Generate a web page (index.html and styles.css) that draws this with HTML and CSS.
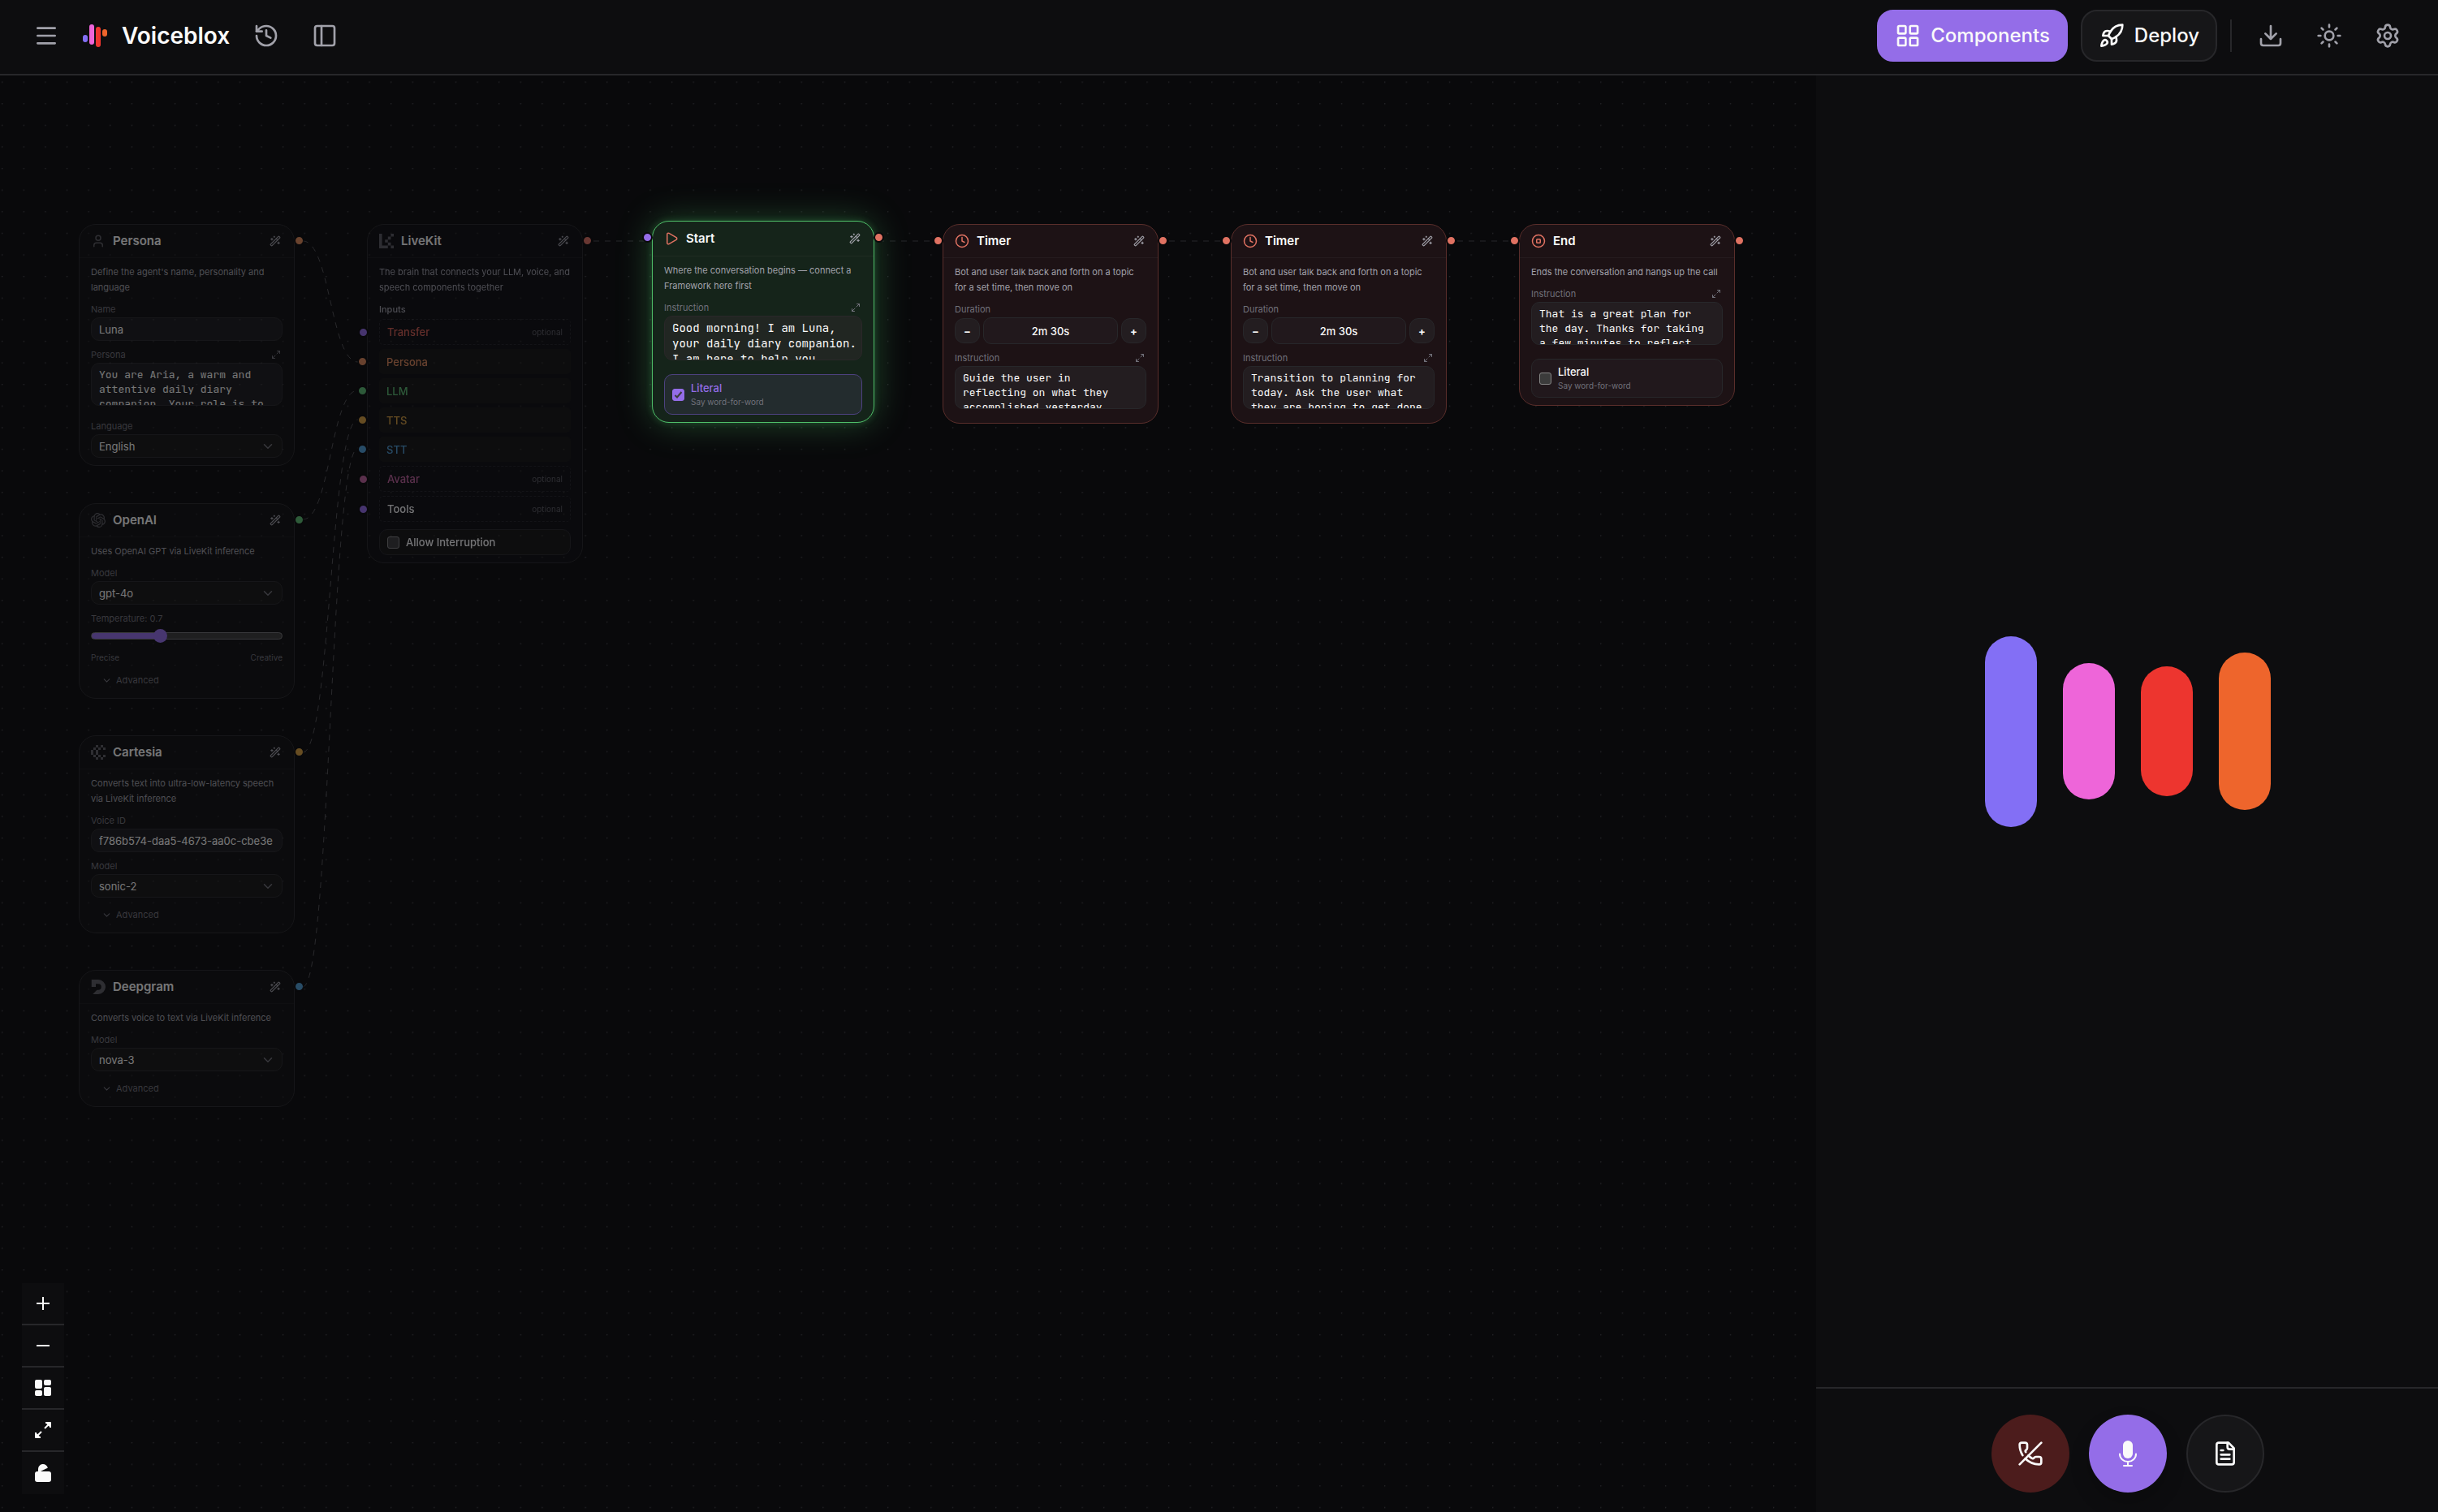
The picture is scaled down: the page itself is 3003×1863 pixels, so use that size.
FILE: index.html
```html
<!DOCTYPE html>
<html lang="en">
<head>
<meta charset="utf-8">
<meta name="viewport" content="width=device-width, initial-scale=1">
<title>Voiceblox</title>
<link rel="stylesheet" href="styles.css">
</head>
<body>
<svg class="sprite" aria-hidden="true">
  <symbol id="i-wand" viewBox="0 0 24 24"><path d="m21.64 3.64-1.28-1.28a1.21 1.21 0 0 0-1.72 0L2.36 18.64a1.21 1.21 0 0 0 0 1.72l1.28 1.28a1.2 1.2 0 0 0 1.72 0L21.64 5.36a1.2 1.2 0 0 0 0-1.72"/><path d="m14 7 3 3M5 6v4M19 14v4M10 2v2M7 8H3M21 16h-4M11 3H9"/></symbol>
  <symbol id="i-expand" viewBox="0 0 24 24"><path d="M15 3h6v6"/><path d="m21 3-7 7"/><path d="m3 21 7-7"/><path d="M9 21H3v-6"/></symbol>
  <symbol id="i-chevron" viewBox="0 0 24 24"><path d="m6 9 6 6 6-6"/></symbol>
  <symbol id="i-clock" viewBox="0 0 24 24"><circle cx="12" cy="12" r="10"/><path d="M12 6v6l4 2"/></symbol>
</svg>

<header class="topbar">
  <div class="topbar-group">
    <button class="icon-btn" type="button" aria-label="Menu"><svg class="icon" viewBox="0 0 24 24"><path d="M4 5h16M4 12h16M4 19h16"/></svg></button>
    <a class="brand" href="#">
      <svg class="brand-mark" viewBox="0 0 30 28" aria-hidden="true"><rect x="0" y="13" width="6" height="9" rx="3" fill="#836ff5"/><rect x="8" y="0" width="6" height="25" rx="3" fill="#ee65d9"/><rect x="16" y="3" width="6" height="25" rx="3" fill="#ed352f"/><rect x="24" y="6" width="6" height="9" rx="3" fill="#ee652c"/></svg>
      <span>Voiceblox</span>
    </a>
    <button class="icon-btn" type="button" aria-label="History"><svg class="icon" viewBox="0 0 24 24"><path d="M3 12a9 9 0 1 0 9-9 9.75 9.75 0 0 0-6.74 2.74L3 8"/><path d="M3 3v5h5M12 7v5l4 2"/></svg></button>
    <button class="icon-btn" type="button" aria-label="Toggle panel"><svg class="icon" viewBox="0 0 24 24"><rect x="3" y="3" width="18" height="18" rx="2"/><path d="M9 3v18"/></svg></button>
  </div>
  <div class="topbar-group">
    <button class="btn btn-primary" type="button"><svg class="icon" viewBox="0 0 24 24"><rect x="3" y="3" width="7" height="7" rx="1"/><rect x="14" y="3" width="7" height="7" rx="1"/><rect x="14" y="14" width="7" height="7" rx="1"/><rect x="3" y="14" width="7" height="7" rx="1"/></svg>Components</button>
    <button class="btn btn-outline" type="button"><svg class="icon" viewBox="0 0 24 24"><path d="M12 15v5s3.03-.55 4-2c1.08-1.62 0-5 0-5"/><path d="M4.5 16.5c-1.5 1.26-2 5-2 5s3.74-.5 5-2c.71-.84.7-2.13-.09-2.91a2.18 2.18 0 0 0-2.91-.09"/><path d="M9 12a22 22 0 0 1 2-3.95A12.88 12.88 0 0 1 22 2c0 2.72-.78 7.5-6 11a22.4 22.4 0 0 1-4 2z"/><path d="M9 12H4s.55-3.03 2-4c1.62-1.08 5 .05 5 .05"/></svg>Deploy</button>
    <span class="divider"></span>
    <button class="icon-btn" type="button" aria-label="Download"><svg class="icon" viewBox="0 0 24 24"><path d="M12 15V3M21 15v4a2 2 0 0 1-2 2H5a2 2 0 0 1-2-2v-4M7 10l5 5 5-5"/></svg></button>
    <button class="icon-btn" type="button" aria-label="Theme"><svg class="icon" viewBox="0 0 24 24"><circle cx="12" cy="12" r="4"/><path d="M12 2v2M12 20v2M4.93 4.93l1.41 1.41M17.66 17.66l1.41 1.41M2 12h2M20 12h2M6.34 17.66l-1.41 1.41M19.07 4.93l-1.41 1.41"/></svg></button>
    <button class="icon-btn" type="button" aria-label="Settings"><svg class="icon" viewBox="0 0 24 24"><path d="M9.671 4.136a2.34 2.34 0 0 1 4.659 0 2.34 2.34 0 0 0 3.319 1.915 2.34 2.34 0 0 1 2.33 4.033 2.34 2.34 0 0 0 0 3.831 2.34 2.34 0 0 1-2.33 4.033 2.34 2.34 0 0 0-3.319 1.915 2.34 2.34 0 0 1-4.659 0 2.34 2.34 0 0 0-3.32-1.915 2.34 2.34 0 0 1-2.33-4.033 2.34 2.34 0 0 0 0-3.831A2.34 2.34 0 0 1 6.35 6.051a2.34 2.34 0 0 0 3.319-1.915"/><circle cx="12" cy="12" r="3"/></svg></button>
  </div>
</header>

<main class="workspace">
  <section class="canvas" aria-label="Flow canvas">
    <svg class="edges" aria-hidden="true">
      <defs><pattern id="dots" x="2" y="7.5" width="26.61" height="26.61" patternUnits="userSpaceOnUse"><circle cx="0.7" cy="0.7" r="0.7" fill="#2b2b2f"/></pattern></defs>
      <rect width="100%" height="100%" fill="url(#dots)"/>
      <g class="edge-lines">
        <path d="M373 204C407 204 407 353 441 353"/>
        <path d="M373 547C407 547 407 388 441 388"/>
        <path d="M373 834C407 834 407 424 441 424"/>
        <path d="M373 1123C407 1123 407 459 441 459"/>
        <path d="M731 204H796"/>
        <path d="M1082 204H1150"/>
        <path d="M1440 204H1506"/>
        <path d="M1795 204H1861"/>
      </g>
    </svg>

    <article class="node dim at-persona">
      <header class="node-head"><svg class="node-icon" viewBox="0 0 24 24"><path d="M19 21v-2a4 4 0 0 0-4-4H9a4 4 0 0 0-4 4v2"/><circle cx="12" cy="7" r="4"/></svg><h2>Persona</h2><button class="mini" type="button" aria-label="Improve"><svg><use href="#i-wand"/></svg></button></header>
      <div class="node-body">
        <p class="desc">Define the agent's name, personality and language</p>
        <div class="field"><label for="p-name">Name</label><input class="control" id="p-name" type="text" value="Luna"></div>
        <div class="field"><div class="label-row"><label for="p-text">Persona</label><button class="mini small" type="button" aria-label="Expand"><svg><use href="#i-expand"/></svg></button></div><textarea class="control area" id="p-text">You are Aria, a warm and attentive daily diary companion. Your role is to</textarea></div>
        <div class="field"><label for="p-lang">Language</label><div class="select"><select class="control" id="p-lang"><option>English</option></select><svg><use href="#i-chevron"/></svg></div></div>
      </div>
      <span class="handle out orange"></span>
    </article>

    <article class="node dim at-openai">
      <header class="node-head"><svg class="node-icon solid" viewBox="0 0 24 24"><path d="M22.2819 9.8211a5.9847 5.9847 0 0 0-.5157-4.9108 6.0462 6.0462 0 0 0-6.5098-2.9A6.0651 6.0651 0 0 0 4.9807 4.1818a5.9847 5.9847 0 0 0-3.9977 2.9 6.0462 6.0462 0 0 0 .7427 7.0966 5.98 5.98 0 0 0 .511 4.9107 6.051 6.051 0 0 0 6.5146 2.9001A5.9847 5.9847 0 0 0 13.2599 24a6.0557 6.0557 0 0 0 5.7718-4.2058 5.9894 5.9894 0 0 0 3.9977-2.9001 6.0557 6.0557 0 0 0-.7475-7.0729zm-9.022 12.6081a4.4755 4.4755 0 0 1-2.8764-1.0408l.1419-.0804 4.7783-2.7582a.7948.7948 0 0 0 .3927-.6813v-6.7369l2.02 1.1686a.071.071 0 0 1 .038.052v5.5826a4.504 4.504 0 0 1-4.4945 4.4944zm-9.6607-4.1254a4.4708 4.4708 0 0 1-.5346-3.0137l.142.0852 4.783 2.7582a.7712.7712 0 0 0 .7806 0l5.8428-3.3685v2.3324a.0804.0804 0 0 1-.0332.0615L9.74 19.9502a4.4992 4.4992 0 0 1-6.1408-1.6464zM2.3408 7.8956a4.485 4.485 0 0 1 2.3655-1.9728V11.6a.7664.7664 0 0 0 .3879.6765l5.8144 3.3543-2.0201 1.1685a.0757.0757 0 0 1-.071 0l-4.8303-2.7865A4.504 4.504 0 0 1 2.3408 7.872zm16.5963 3.8558L13.1038 8.364 15.1192 7.2a.0757.0757 0 0 1 .071 0l4.8303 2.7913a4.4944 4.4944 0 0 1-.6765 8.1042v-5.6772a.79.79 0 0 0-.407-.667zm2.0107-3.0231l-.142-.0852-4.7735-2.7818a.7759.7759 0 0 0-.7854 0L9.409 9.2297V6.8974a.0662.0662 0 0 1 .0284-.0615l4.8303-2.7866a4.4992 4.4992 0 0 1 6.6802 4.66zM8.3065 12.863l-2.02-1.1638a.0804.0804 0 0 1-.038-.0567V6.0742a4.4992 4.4992 0 0 1 7.3757-3.4537l-.142.0805L8.704 5.459a.7948.7948 0 0 0-.3927.6813zm1.0976-2.3654l2.602-1.4998 2.6069 1.4998v2.9994l-2.5974 1.4997-2.6067-1.4997Z"/></svg><h2>OpenAI</h2><button class="mini" type="button" aria-label="Improve"><svg><use href="#i-wand"/></svg></button></header>
      <div class="node-body">
        <p class="desc">Uses OpenAI GPT via LiveKit inference</p>
        <div class="field"><label for="o-model">Model</label><div class="select"><select class="control" id="o-model"><option>gpt-4o</option></select><svg><use href="#i-chevron"/></svg></div></div>
        <div class="field"><label for="o-temp">Temperature: 0.7</label><input class="range" id="o-temp" type="range" min="0" max="2" step="0.1" value="0.7" style="--fill: 35%"></div>
        <div class="hints"><span>Precise</span><span>Creative</span></div>
        <button class="advanced" type="button"><svg><use href="#i-chevron"/></svg>Advanced</button>
      </div>
      <span class="handle out green"></span>
    </article>

    <article class="node dim at-cartesia">
      <header class="node-head"><svg class="node-icon solid" viewBox="0 0 24 24"><path d="M8 0h4v4H8zM16 0h4v4h-4zM4 4h4v4H4zM12 4h4v4h-4zM20 4h4v4h-4zM0 8h4v8H0zM8 8h4v8H8zM4 16h4v4H4zM12 16h4v4h-4zM20 16h4v4h-4zM8 20h4v4H8zM16 20h4v4h-4z"/></svg><h2>Cartesia</h2><button class="mini" type="button" aria-label="Improve"><svg><use href="#i-wand"/></svg></button></header>
      <div class="node-body">
        <p class="desc">Converts text into ultra-low-latency speech via LiveKit inference</p>
        <div class="field"><label for="c-voice">Voice ID</label><input class="control" id="c-voice" type="text" value="f786b574-daa5-4673-aa0c-cbe3e"></div>
        <div class="field"><label for="c-model">Model</label><div class="select"><select class="control" id="c-model"><option>sonic-2</option></select><svg><use href="#i-chevron"/></svg></div></div>
        <button class="advanced" type="button"><svg><use href="#i-chevron"/></svg>Advanced</button>
      </div>
      <span class="handle out amber"></span>
    </article>

    <article class="node dim at-deepgram">
      <header class="node-head"><svg class="node-icon solid" viewBox="0 0 24 24"><path d="M1 0h11a12 12 0 0 1 0 24H3l7-7h2a5 5 0 0 0 0-10H8v5H1z"/></svg><h2>Deepgram</h2><button class="mini" type="button" aria-label="Improve"><svg><use href="#i-wand"/></svg></button></header>
      <div class="node-body">
        <p class="desc">Converts voice to text via LiveKit inference</p>
        <div class="field"><label for="d-model">Model</label><div class="select"><select class="control" id="d-model"><option>nova-3</option></select><svg><use href="#i-chevron"/></svg></div></div>
        <button class="advanced" type="button"><svg><use href="#i-chevron"/></svg>Advanced</button>
      </div>
      <span class="handle out blue"></span>
    </article>

    <article class="node dim at-livekit">
      <header class="node-head"><svg class="node-icon solid" viewBox="0 0 20 20"><path d="M0 0h4v16h8v4H0zM16 0h4v4h-4zM12 4h4v4h-4zM8 8h4v4H8zM12 12h4v4h-4zM16 16h4v4h-4z"/></svg><h2>LiveKit</h2><button class="mini" type="button" aria-label="Improve"><svg><use href="#i-wand"/></svg></button></header>
      <div class="node-body">
        <p class="desc">The brain that connects your LLM, voice, and speech components together</p>
        <div class="inputs">
          <h3>Inputs</h3>
          <ul>
            <li class="port open red-text">Transfer<small>optional</small><span class="handle in purple"></span></li>
            <li class="port orange-text">Persona<span class="handle in orange"></span></li>
            <li class="port green-text">LLM<span class="handle in green"></span></li>
            <li class="port amber-text">TTS<span class="handle in amber"></span></li>
            <li class="port blue-text">STT<span class="handle in blue"></span></li>
            <li class="port open pink-text">Avatar<small>optional</small><span class="handle in pink"></span></li>
            <li class="port open">Tools<small>optional</small><span class="handle in purple"></span></li>
          </ul>
        </div>
        <label class="check short"><input type="checkbox"><span class="check-title">Allow Interruption</span></label>
      </div>
      <span class="handle out red"></span>
    </article>

    <article class="node active at-start">
      <header class="node-head"><svg class="node-icon" viewBox="0 0 24 24"><path d="M5 5a2 2 0 0 1 3.008-1.728l11.997 6.998a2 2 0 0 1 .003 3.458l-12 7A2 2 0 0 1 5 19z"/></svg><h2>Start</h2><button class="mini" type="button" aria-label="Improve"><svg><use href="#i-wand"/></svg></button></header>
      <div class="node-body">
        <p class="desc">Where the conversation begins — connect a Framework here first</p>
        <div class="field"><div class="label-row"><label for="s-text">Instruction</label><button class="mini small" type="button" aria-label="Expand"><svg><use href="#i-expand"/></svg></button></div><textarea class="control area" id="s-text">Good morning! I am Luna, your daily diary companion. I am here to help you</textarea></div>
        <label class="check on"><input type="checkbox" checked><span><span class="check-title">Literal</span><span class="check-sub">Say word-for-word</span></span></label>
      </div>
      <span class="handle left purple"></span><span class="handle out red"></span>
    </article>

    <article class="node flow at-timer-1">
      <header class="node-head"><svg class="node-icon"><use href="#i-clock"/></svg><h2>Timer</h2><button class="mini" type="button" aria-label="Improve"><svg><use href="#i-wand"/></svg></button></header>
      <div class="node-body">
        <p class="desc">Bot and user talk back and forth on a topic for a set time, then move on</p>
        <div class="field"><label for="t1-dur">Duration</label><div class="stepper"><button type="button">−</button><input class="control" id="t1-dur" type="text" value="2m 30s"><button type="button">+</button></div></div>
        <div class="field"><div class="label-row"><label for="t1-text">Instruction</label><button class="mini small" type="button" aria-label="Expand"><svg><use href="#i-expand"/></svg></button></div><textarea class="control area" id="t1-text">Guide the user in reflecting on what they accomplished yesterday.</textarea></div>
      </div>
      <span class="handle left red"></span><span class="handle out red"></span>
    </article>

    <article class="node flow at-timer-2">
      <header class="node-head"><svg class="node-icon"><use href="#i-clock"/></svg><h2>Timer</h2><button class="mini" type="button" aria-label="Improve"><svg><use href="#i-wand"/></svg></button></header>
      <div class="node-body">
        <p class="desc">Bot and user talk back and forth on a topic for a set time, then move on</p>
        <div class="field"><label for="t2-dur">Duration</label><div class="stepper"><button type="button">−</button><input class="control" id="t2-dur" type="text" value="2m 30s"><button type="button">+</button></div></div>
        <div class="field"><div class="label-row"><label for="t2-text">Instruction</label><button class="mini small" type="button" aria-label="Expand"><svg><use href="#i-expand"/></svg></button></div><textarea class="control area" id="t2-text">Transition to planning for today. Ask the user what they are hoping to get done</textarea></div>
      </div>
      <span class="handle left red"></span><span class="handle out red"></span>
    </article>

    <article class="node flow at-end">
      <header class="node-head"><svg class="node-icon" viewBox="0 0 24 24"><circle cx="12" cy="12" r="10"/><rect x="9" y="9" width="6" height="6" rx="1"/></svg><h2>End</h2><button class="mini" type="button" aria-label="Improve"><svg><use href="#i-wand"/></svg></button></header>
      <div class="node-body">
        <p class="desc">Ends the conversation and hangs up the call</p>
        <div class="field"><div class="label-row"><label for="e-text">Instruction</label><button class="mini small" type="button" aria-label="Expand"><svg><use href="#i-expand"/></svg></button></div><textarea class="control area" id="e-text">That is a great plan for the day. Thanks for taking a few minutes to reflect</textarea></div>
        <label class="check"><input type="checkbox"><span><span class="check-title">Literal</span><span class="check-sub">Say word-for-word</span></span></label>
      </div>
      <span class="handle left red"></span><span class="handle out red"></span>
    </article>

    <div class="zoom-controls">
      <button type="button" aria-label="Zoom in"><svg viewBox="0 0 24 24"><path d="M4 12h16M12 4v16"/></svg></button>
      <button type="button" aria-label="Zoom out"><svg viewBox="0 0 24 24"><path d="M4 12h16"/></svg></button>
      <button type="button" aria-label="Auto layout"><svg class="filled" viewBox="0 0 24 24"><rect x="3" y="3" width="7" height="9" rx="1"/><rect x="14" y="3" width="7" height="5" rx="1"/><rect x="14" y="12" width="7" height="9" rx="1"/><rect x="3" y="16" width="7" height="5" rx="1"/></svg></button>
      <button type="button" aria-label="Fit view"><svg class="filled"><use href="#i-expand"/></svg></button>
      <button type="button" aria-label="Lock"><svg class="filled" viewBox="0 0 24 24"><rect x="3" y="11" width="18" height="11" rx="2"/><path d="M7 11V7a5 5 0 0 1 9.9-1"/></svg></button>
    </div>
  </section>

  <aside class="call-panel">
    <div class="visualizer"><span class="bar bar-violet"></span><span class="bar bar-pink"></span><span class="bar bar-red"></span><span class="bar bar-orange"></span></div>
    <footer class="call-actions">
      <button class="round hang-up" type="button" aria-label="End call"><svg class="icon" viewBox="0 0 24 24"><path d="M10.1 13.9a14 14 0 0 0 3.732 2.668 1 1 0 0 0 1.213-.303l.355-.465A2 2 0 0 1 17 15h3a2 2 0 0 1 2 2v3a2 2 0 0 1-2 2 18 18 0 0 1-12.728-5.272"/><path d="M22 2 2 22"/><path d="M4.76 13.582A18 18 0 0 1 2 4a2 2 0 0 1 2-2h3a2 2 0 0 1 2 2v3a2 2 0 0 1-.8 1.6l-.468.351a1 1 0 0 0-.292 1.233 14 14 0 0 0 .244.473"/></svg></button>
      <button class="round mic" type="button" aria-label="Microphone"><svg class="icon" viewBox="0 0 32 32"><rect x="10" y="0" width="12" height="22" rx="6" fill="currentColor" stroke="none"/><path d="M6 16.5a10 9.5 0 0 0 20 0M16 26v5M11 31h10"/></svg></button>
      <button class="round transcript" type="button" aria-label="Transcript"><svg class="icon" viewBox="0 0 24 24"><path d="M15 2H6a2 2 0 0 0-2 2v16a2 2 0 0 0 2 2h12a2 2 0 0 0 2-2V7Z"/><path d="M14 2v4a2 2 0 0 0 2 2h4M10 9H8M16 13H8M16 17H8"/></svg></button>
    </footer>
  </aside>
</main>
</body>
</html>
```
FILE: styles.css
```css
:root {
  color-scheme: dark;
  --bg: #09090b;
  --panel: #0d0d0f;
  --line: #27272a;
  --text: #fafafa;
  --muted: #a1a1aa;
  --faint: #71717a;
  --accent: #946de8;
  --red: #e07262;
  --orange: #e08a5a;
  --green: #5cbf72;
  --amber: #d9a13f;
  --blue: #4f9fd6;
  --pink: #c0629c;
}

* { box-sizing: border-box; }

body {
  margin: 0;
  min-height: 100vh;
  display: flex;
  flex-direction: column;
  background: var(--bg);
  color: var(--text);
  font-family: Inter, "Liberation Sans", sans-serif;
  font-size: 13px;
}

button, input, select, textarea { font: inherit; color: inherit; margin: 0; }
button { display: flex; align-items: center; justify-content: center; padding: 0; border: 0; background: none; cursor: pointer; }
h2, h3, p, ul { margin: 0; padding: 0; }
svg { display: block; fill: none; stroke: currentColor; stroke-width: 2; stroke-linecap: round; stroke-linejoin: round; }
.sprite { display: none; }
.icon { width: 32px; height: 32px; }

/* Top bar */
.topbar {
  display: flex;
  justify-content: space-between;
  height: 93px;
  padding: 0 34px 4px 29px;
  background: var(--panel);
  border-bottom: 2px solid var(--line);
}
.topbar-group { display: flex; align-items: center; gap: 16px; }
.icon-btn { width: 56px; height: 56px; color: var(--muted); }
.brand { display: flex; align-items: center; gap: 18px; padding: 0 1px; color: var(--text); font-size: 28px; line-height: 36px; font-weight: 600; text-decoration: none; }
.brand-mark { width: 30px; height: 28px; stroke: none; }
.btn { height: 64px; gap: 12px; padding: 0 20px; border: 2px solid var(--line); border-radius: 20px; background: #161618; font-size: 24px; font-weight: 500; }
.btn-primary { background: var(--accent); border-color: var(--accent); }
.divider { width: 2px; height: 40px; margin-right: 4px; background: var(--line); }

/* Workspace */
.workspace { flex: 1; display: flex; }
.canvas { flex: 1; position: relative; overflow: hidden; }
.edges { position: absolute; inset: 0; width: 100%; height: 100%; stroke: none; }
.edge-lines { stroke: #29292c; stroke-width: 1px; stroke-dasharray: 7 7; stroke-linecap: butt; }

/* Nodes */
.node {
  position: absolute;
  width: 266px;
  border: 1px solid var(--line);
  border-radius: 21px;
  background: #0e0e10;
  --field: #1a1a1d;
  --well: #151514;
  --field-line: #27272a;
}
.dim { opacity: .45; }
.flow { background: #1d1215; border-color: #5a2e2b; --field: #231d20; --well: #21181c; --field-line: #27272a; }
.active {
  width: 274px;
  background: #15241a;
  border-color: #4fbf69;
  box-shadow: 0 0 8px rgb(80 200 110 / 25%), 0 0 44px rgb(80 200 110 / 32%);
  --field: #212622;
  --well: #232c2e;
  --field-line: #2a2729;
}
.at-persona { left: 97px; top: 183px; }
.at-openai { left: 97px; top: 527px; }
.at-cartesia { left: 97px; top: 813px; }
.at-deepgram { left: 97px; top: 1102px; }
.at-livekit { left: 452px; top: 183px; }
.at-start { left: 803px; top: 179px; }
.at-timer-1 { left: 1161px; top: 183px; }
.at-timer-2 { left: 1516px; top: 183px; }
.at-end { left: 1871px; top: 183px; }

.node-head { display: flex; align-items: center; gap: 9px; height: 41px; padding: 0 16px 0 14px; border-bottom: 1px solid rgb(255 255 255 / 4%); }
.active .node-head { height: 43px; }
.node-head h2 { flex: 1; font-size: 15px; line-height: 20px; font-weight: 600; }
.node-icon { width: 18px; height: 18px; color: #5c5c62; }
.node-icon.solid { fill: currentColor; stroke: none; }
.flow .node-icon, .active .node-icon { color: var(--red); }
.mini { color: var(--muted); }
.mini svg { width: 14px; height: 14px; }
.mini.small { color: var(--faint); padding-right: 2px; }
.mini.small svg { width: 12px; height: 12px; }

.node-body { display: flex; flex-direction: column; gap: 9px; padding: 8px 14px 9px; }
.desc { font-size: 11px; line-height: 19px; color: var(--muted); }
.field { display: flex; flex-direction: column; gap: 2px; }
.field label, .inputs h3 { font-size: 11px; line-height: 16px; font-weight: 400; color: var(--faint); }
.label-row { display: flex; justify-content: space-between; }
.control { width: 100%; height: 29px; padding: 0 9px; border: 1px solid var(--field-line); border-radius: 10px; background: var(--field); outline: 0; }
.area { height: 53px; margin-bottom: 8px; padding: 5px 9px 0; resize: none; overflow: hidden; font-family: "JetBrains Mono", "DejaVu Sans Mono", monospace; font-size: 13px; line-height: 18px; }
.active .area { height: 55px; padding-right: 4px; font-size: 14px; line-height: 19px; }
.select { display: grid; align-items: center; }
.select > * { grid-area: 1 / 1; }
.select select { appearance: none; background: var(--well); }
.select svg { width: 18px; height: 18px; margin-right: 9px; justify-self: end; color: var(--faint); pointer-events: none; }

.range { appearance: none; width: 100%; height: 22px; background: none; }
.range::-webkit-slider-runnable-track {
  height: 9px;
  border: 1px solid #757578;
  border-radius: 5px;
  background: linear-gradient(var(--accent), var(--accent)) 0 0 / var(--fill) 100% no-repeat #3b3b3b;
}
.range::-webkit-slider-thumb { appearance: none; width: 17px; height: 17px; margin-top: -5px; border-radius: 50%; background: var(--accent); }

.hints { display: flex; justify-content: space-between; font-size: 10px; line-height: 14px; color: var(--faint); }
.advanced { align-self: flex-start; gap: 5px; margin: 4px 0 5px 13px; font-size: 11px; line-height: 16px; color: var(--faint); }
.advanced svg { width: 13px; height: 13px; }

.inputs { display: flex; flex-direction: column; gap: 4px; }
.inputs h3 { font-weight: 500; color: var(--muted); }
.inputs ul { display: flex; flex-direction: column; gap: 5px; list-style: none; }
.port { position: relative; display: flex; align-items: center; justify-content: space-between; height: 31px; padding: 0 9px; border-radius: 5px; background: var(--well); font-weight: 500; }
.port.open { height: 32px; border: 1px dashed #232326; background: none; }
.port small { font-size: 10px; font-weight: 400; color: #5c5c62; }

.check { display: flex; align-items: center; gap: 8px; height: 48px; padding: 0 9px; border: 1px solid var(--field-line); border-radius: 10px; background: var(--well); }
.check.short { height: 32px; }
.check.on { height: 50px; border-color: #4d4280; }
.check input { appearance: none; width: 15px; height: 15px; border: 1px solid #858585; border-radius: 3px; background: #3b3b3b; }
.check input:checked {
  border-color: var(--accent);
  background: var(--accent) url("data:image/svg+xml,%3Csvg xmlns='http://www.w3.org/2000/svg' viewBox='0 0 13 13'%3E%3Cpath d='M2.500 7 5 9.500 10.500 3' fill='none' stroke='%233b3b3b' stroke-width='2'/%3E%3C/svg%3E") center / 100% no-repeat;
}
.check-title { display: block; line-height: 18px; font-weight: 500; }
.check-sub { display: block; font-size: 10px; line-height: 16px; color: var(--faint); }
.check.on .check-title { color: var(--accent); }

.stepper { display: flex; align-items: center; gap: 4px; }
.stepper button { flex: none; width: 31px; height: 31px; border: 1px solid var(--field-line); border-radius: 11px; background: var(--field); font-weight: 700; }
.stepper .control { flex: 1; min-width: 0; height: 33px; background: var(--well); text-align: center; font-weight: 500; }

.handle { position: absolute; width: 13px; height: 13px; border: 2px solid var(--bg); border-radius: 50%; }
.handle.out { right: -13px; top: 13px; }
.handle.left { left: -13px; top: 13px; }
.handle.in { left: -27px; }
.purple { background: var(--accent); }
.red { background: var(--red); }
.orange { background: var(--orange); }
.green { background: var(--green); }
.amber { background: var(--amber); }
.blue { background: var(--blue); }
.pink { background: var(--pink); }
.red-text { color: #d65f52; }
.orange-text { color: var(--orange); }
.green-text { color: var(--green); }
.amber-text { color: var(--amber); }
.blue-text { color: var(--blue); }
.pink-text { color: var(--pink); }

.zoom-controls { position: absolute; left: 27px; bottom: 22px; display: flex; flex-direction: column; background: var(--panel); }
.zoom-controls button { width: 52px; height: 52px; border-bottom: 2px solid var(--line); }
.zoom-controls button:last-child { border-bottom: 0; }
.zoom-controls svg { width: 24px; height: 24px; stroke-linecap: butt; }
.zoom-controls .filled { fill: currentColor; }

/* Call panel */
.call-panel { flex: 0 0 766px; display: flex; flex-direction: column; background: var(--panel); }
.visualizer { flex: 1; display: flex; align-items: center; justify-content: center; gap: 32px; padding-left: 2px; }
.bar { width: 64px; border-radius: 32px; }
.bar-violet { height: 235px; background: #836ff5; }
.bar-pink { height: 168px; background: #ee65d9; }
.bar-red { height: 160px; background: #ed352f; }
.bar-orange { height: 194px; background: #ee652c; }
.call-actions { display: flex; justify-content: center; gap: 24px; padding: 32px 0 24px 2px; border-top: 2px solid var(--line); }
.round { width: 96px; height: 96px; border-radius: 50%; }
.hang-up { background: #4c1c1c; }
.mic { background: var(--accent); box-shadow: 0 12px 24px rgb(0 0 0 / 20%); }
.transcript { background: #161618; border: 2px solid var(--line); }
```
